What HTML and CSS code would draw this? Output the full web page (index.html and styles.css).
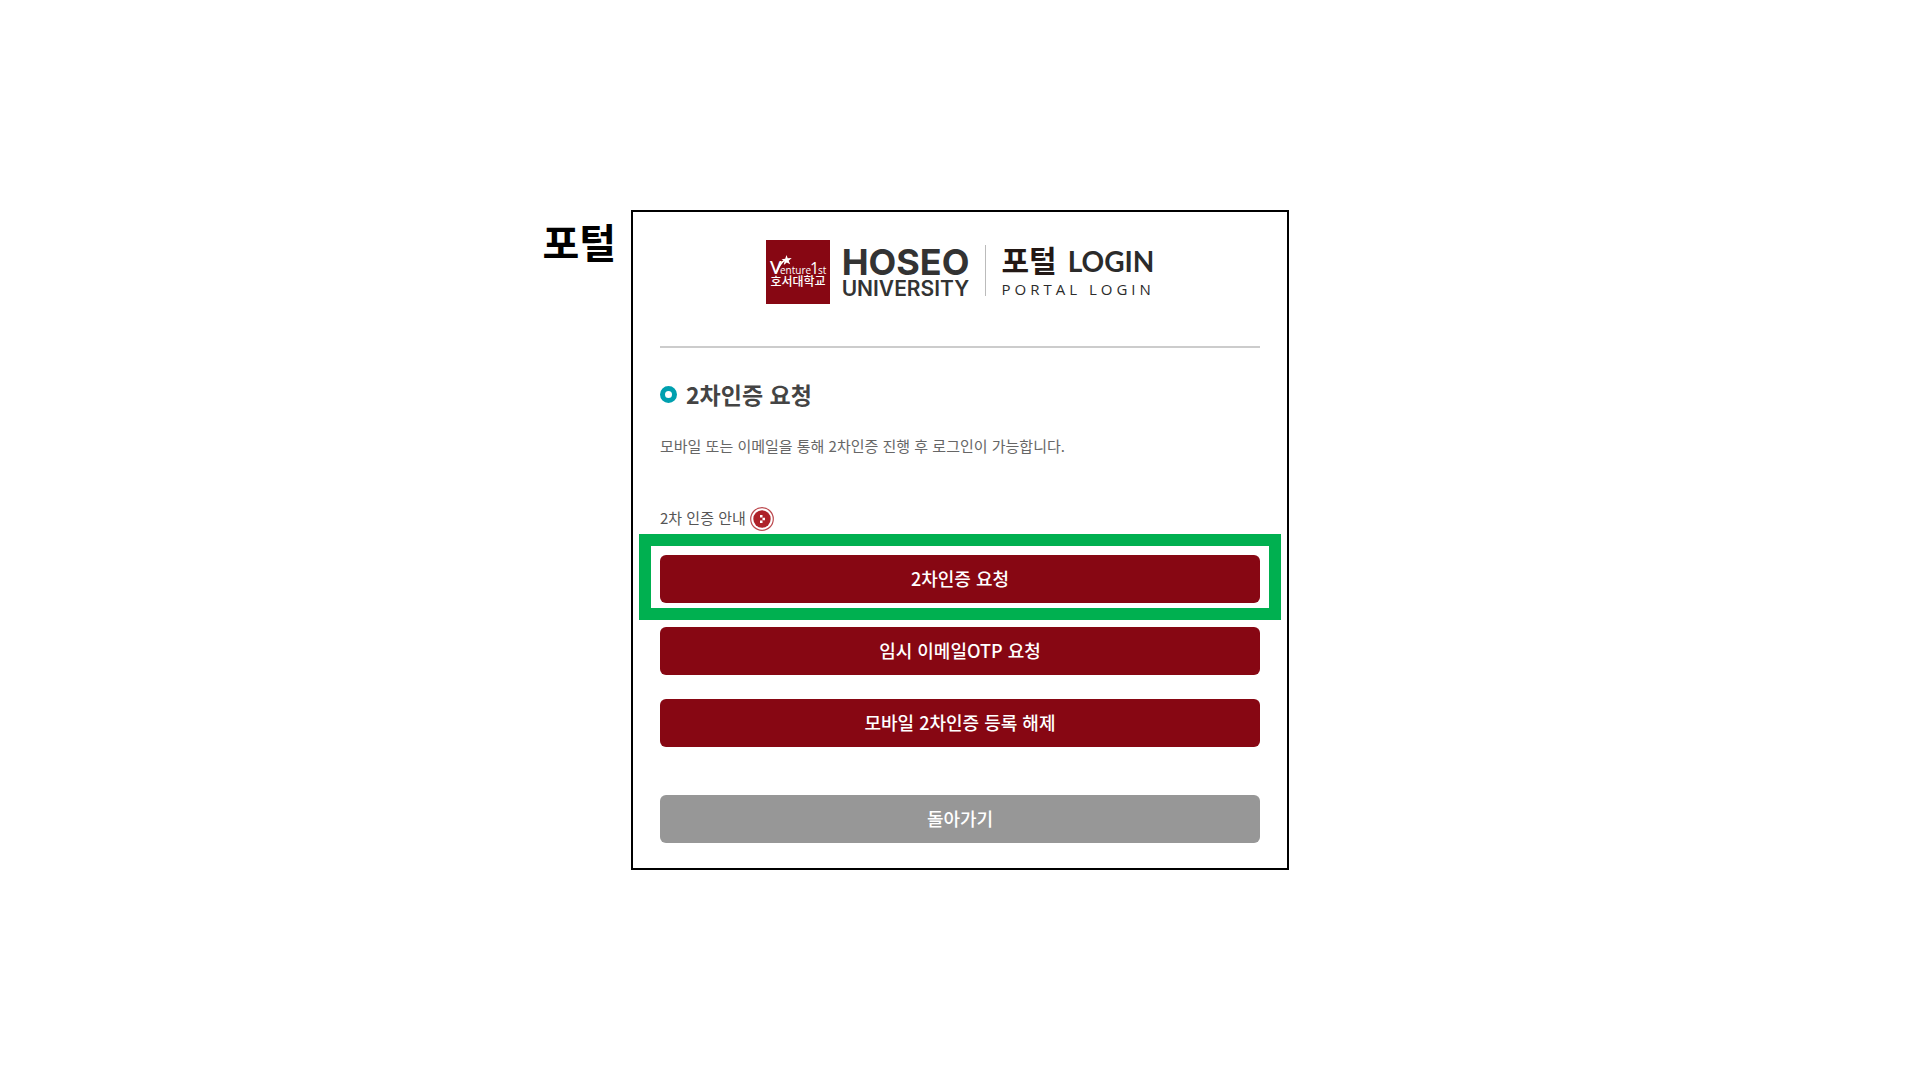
FILE: index.html
```html
<!DOCTYPE html>
<html lang="ko">
<head>
<meta charset="utf-8">
<meta name="viewport" content="width=device-width, initial-scale=1">
<title>포털 LOGIN</title>
<link rel="stylesheet" href="styles.css">
</head>
<body>
<main class="page">
  <h1 class="page-label">포털</h1>
  <section class="card">
    <header class="brand">
      <svg class="emblem" viewBox="0 0 64 64" role="img" aria-label="Venture 1st 호서대학교">
        <rect width="64" height="64" fill="#870713"/>
        <path d="M10.500 32c2-5 4.500-9.500 8.500-12" fill="none" stroke="#fff" stroke-width="1.600"/>
        <path d="M20.500 15l1.200 3.300 4-.2-3 2.600 1.500 3.600-3.400-1.900-3 2.600.7-3.900-3-1.900 3.700-.5z" fill="#fff"/>
        <text class="emblem-v" x="4" y="34">V</text>
        <text class="emblem-en" x="14" y="34">enture</text>
        <text class="emblem-one" x="44" y="34">1</text>
        <text class="emblem-en" x="52" y="34">st</text>
        <text class="emblem-ko" x="32" y="46" text-anchor="middle">호서대학교</text>
      </svg>
      <div class="wordmark">
        <span class="wordmark-top">HOSEO</span>
        <span class="wordmark-bottom">UNIVERSITY</span>
      </div>
      <div class="portal">
        <span class="portal-title"><span class="portal-ko">포털</span><span class="portal-en">LOGIN</span></span>
        <span class="portal-sub">PORTAL LOGIN</span>
      </div>
    </header>
    <h2 class="title"><span class="ring"></span>2차인증 요청</h2>
    <p class="description">모바일 또는 이메일을 통해 2차인증 진행 후 로그인이 가능합니다.</p>
    <a class="guide" href="#guide">2차 인증 안내
      <svg class="guide-icon" viewBox="0 0 24 24" aria-hidden="true">
        <circle cx="12" cy="12" r="11.300" fill="#fff" stroke="#bd4b50" stroke-width="1.200"/>
        <circle cx="12" cy="12" r="8.700" fill="#ad2229"/>
        <path d="M10 8h2.500v2.500H10zM12.500 10.700H15v2.600h-2.500zM10 13.500h2.500V16H10z" fill="#fff"/>
      </svg>
    </a>
    <div class="actions">
      <div class="highlight"><button class="button" type="button">2차인증 요청</button></div>
      <button class="button" type="button">임시 이메일OTP 요청</button>
      <button class="button" type="button">모바일 2차인증 등록 해제</button>
      <button class="button button-back" type="button">돌아가기</button>
    </div>
  </section>
</main>
</body>
</html>
```
FILE: styles.css
```css
* { box-sizing: border-box; }

body {
  margin: 0;
  background: #fff;
  color: #444;
  font-family: "Noto Sans CJK KR", sans-serif;
}

.page {
  min-height: 100vh;
  display: grid;
  grid-template-columns: 1fr minmax(0, 658px) 1fr;
  align-content: center;
}

.page-label {
  margin: 0;
  padding: 3px 15px 0 0;
  text-align: right;
  font-size: 40px;
  line-height: 56px;
  font-weight: 700;
  color: #000;
}

.card {
  border: 2px solid #000;
  padding: 28px 27px 25px;
}

.brand {
  display: flex;
  justify-content: center;
  padding-bottom: 42px;
  border-bottom: 2px solid #ccc;
}

.emblem {
  width: 64px;
  height: 64px;
  margin-right: 12px;
}

.emblem text { fill: #fff; }
.emblem-v { font: 600 17px Lato, sans-serif; }
.emblem-en { font: 500 10px "Open Sans", sans-serif; }
.emblem-one { font: 400 16px "Open Sans", sans-serif; }
.emblem-ko { font: 500 12px "Noto Sans CJK KR", sans-serif; }

.wordmark {
  display: flex;
  flex-direction: column;
  padding-top: 4px;
  color: #333;
  font-family: Inter, sans-serif;
}

.wordmark-top {
  font-size: 36px;
  line-height: 36px;
  font-weight: 700;
}

.wordmark-bottom {
  font-size: 21px;
  line-height: 17px;
  font-weight: 600;
}

.portal {
  display: flex;
  flex-direction: column;
  height: 51px;
  margin: 5px 0 0 16px;
  padding-left: 15px;
  border-left: 1px solid #bbb;
  color: #2b2b2b;
}

.portal-title {
  display: flex;
  align-items: baseline;
  gap: 11px;
  font-size: 30px;
  line-height: 28px;
  white-space: nowrap;
}

.portal-ko { font-weight: 700; color: #231815; }

.portal-en {
  font-family: Lato, sans-serif;
  font-weight: 700;
  font-size: 28px;
}

.portal-sub {
  margin: 4px -4px 0 0;
  font-family: "Open Sans", sans-serif;
  font-size: 15px;
  line-height: 20px;
  letter-spacing: 4px;
  white-space: nowrap;
}

.title {
  display: flex;
  align-items: center;
  gap: 9px;
  margin: 30px 0 0;
  font-size: 23px;
  line-height: 32px;
  font-weight: 700;
}

.ring {
  width: 17px;
  height: 17px;
  border: 5px solid #00a0af;
  border-radius: 50%;
}

.description {
  margin: 24px 0 0;
  font-size: 15px;
  line-height: 24px;
  color: #666;
}

.guide {
  display: flex;
  gap: 4px;
  width: fit-content;
  margin-top: 49px;
  font-size: 15px;
  line-height: 22px;
  color: #555;
  text-decoration: none;
}

.guide-icon { width: 24px; height: 24px; }

.actions {
  display: flex;
  flex-direction: column;
  gap: 24px;
  margin-top: 24px;
}

.highlight { position: relative; }

.highlight::after {
  content: "";
  position: absolute;
  inset: -21px -21px -17px;
  border: 12px solid #00b050;
  pointer-events: none;
}

.button {
  display: block;
  width: 100%;
  height: 48px;
  padding: 0 0 2px;
  border: 0;
  border-radius: 6px;
  background: #870713;
  color: #fff;
  font-family: inherit;
  font-size: 18px;
  font-weight: 500;
}

.button-back {
  margin-top: 24px;
  background: #979797;
}
```
